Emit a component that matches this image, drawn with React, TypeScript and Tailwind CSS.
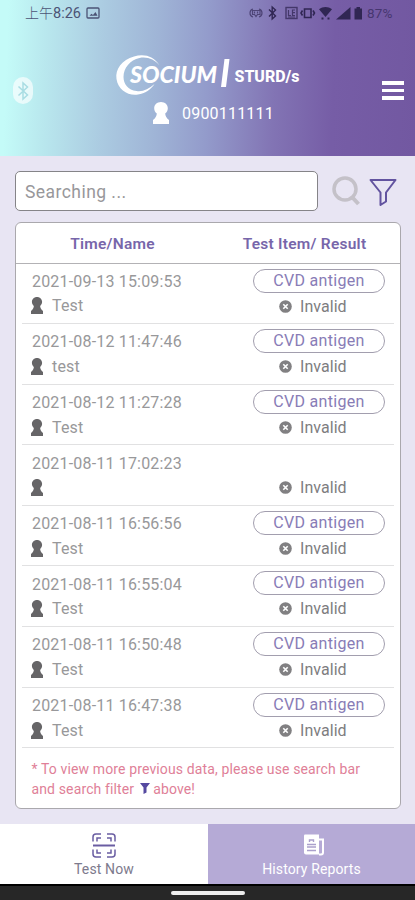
import { ReactNode } from "react";

const records = [
    { time: "2021-09-13 15:09:53", name: "Test", item: "CVD antigen" },
    { time: "2021-08-12 11:47:46", name: "test", item: "CVD antigen" },
    { time: "2021-08-12 11:27:28", name: "Test", item: "CVD antigen" },
    { time: "2021-08-11 17:02:23", name: "", item: "" },
    { time: "2021-08-11 16:56:56", name: "Test", item: "CVD antigen" },
    { time: "2021-08-11 16:55:04", name: "Test", item: "CVD antigen" },
    { time: "2021-08-11 16:50:48", name: "Test", item: "CVD antigen" },
    { time: "2021-08-11 16:47:38", name: "Test", item: "CVD antigen" },
];

function PersonIcon({ className }: { className: string }) {
    return (
        <svg viewBox="0 0 16 22" preserveAspectRatio="none" className={className} fill="currentColor">
            <path d="M8 0c4 0 6.800 2.800 6.800 6.300 0 2.200-.9 4-2.600 5.200.2 2.500 1 4.300 3.800 6.500v4H0v-4c2.800-2.200 3.600-4 3.800-6.500C2.100 10.300 1.200 8.500 1.200 6.300 1.200 2.800 4 0 8 0z" />
        </svg>
    );
}

function StatusBar() {
    return (
        <div className="flex h-[26px] items-center pl-[25px] text-[#4b5375]">
            <span className="w-[57px] whitespace-nowrap">
                <span className="font-['Noto_Sans_CJK_TC',sans-serif] text-[14px] leading-none font-light">上午</span>
                <span className="text-[14.500px] leading-none">8:26</span>
            </span>
            <svg width="14" height="12" viewBox="0 0 14 12" className="ml-[4px]" fill="none" stroke="currentColor" strokeWidth="1.300">
                <rect x="1" y="1" width="12" height="10" rx="1" />
                <path d="M3.500 8.800l2-2 1.500 1.200 2.500-3 2 3.800z" fill="currentColor" stroke="none" />
            </svg>
            <svg width="116" height="18" viewBox="0 0 116 18" className="ml-[149px] text-[#302653]" fill="none" stroke="currentColor" strokeWidth="1.200">
                <g opacity=".65">
                    <path d="M4 5C0 6 0 12 4 13M10 5c4 1 4 7 0 8M3.500 6.500h7.500v4H8.500L7 12.500 5.500 10.500h-2z" />
                    <path d="M5.500 7.500v2M8.500 7.500v2" />
                </g>
                <path d="M20 5.500l6.500 6.500-3.300 3V3l3.300 3-6.500 6.500" strokeWidth="1.400" />
                <rect x="37" y="3.500" width="11" height="11" strokeWidth="1.400" opacity=".75" />
                <path d="M39.500 6v5.500H42M46 6h-2.500v5.500H46M43.500 8.700H46M39 13h7" opacity=".75" />
                <path d="M55.500 5h6.500v8.500h-6.500zM53.500 6.500L52 9l1.500 2.500M64 6.500L65.500 9 64 11.500" strokeWidth="1.600" />
                <path d="M70 5.200c4-3 9-3 13 0L76.500 13z" fill="currentColor" stroke="none" />
                <path d="M72.500 14.500h2M78.500 14.500h2" strokeWidth="2" />
                <path d="M87 15.500L101.500 3v12.500z" fill="currentColor" stroke="none" />
                <path d="M105.500 4.500h2V3h3.500v1.500h2v11h-7.500z" fill="currentColor" stroke="none" />
            </svg>
            <span className="ml-[2px] text-[13.500px] tracking-[0.200px] text-[#46366f]">87%</span>
        </div>
    );
}

function Logo() {
    return (
        <svg width="190" height="44" viewBox="0 0 190 44" className="ml-[115px] block overflow-visible text-white" fill="currentColor">
            <path d="M44.500 12.500C39 3 29 .5 19 3.500 7 7 0 16 1.500 26 3 37 13 43 23 41.500c7-1 13-5 16.500-10.500-6 5.500-12 8-18 7C13 37 8.500 31 8.500 24 8.500 15 15 7 24.500 5c8-1.500 15 1.500 20 7.500z" />
            <text x="15" y="30" fontFamily="Lato, sans-serif" fontWeight="900" fontStyle="italic" fontSize="22" textLength="87" lengthAdjust="spacingAndGlyphs">SOCIUM</text>
            <path d="M109.500 6h5l-3.500 28h-5z" />
            <text x="119.500" y="29" fontFamily="Roboto, sans-serif" fontWeight="800" fontSize="16.500" textLength="65" lengthAdjust="spacingAndGlyphs">STURD/s</text>
        </svg>
    );
}

function Header() {
    return (
        <header className="h-[155.500px] bg-[linear-gradient(92deg,#c4fbf8_2%,#b9e8ee_11%,#abcbe1_25%,#9fb4d6_38%,#939bcb_50%,#8274b4_66%,#765da6_80%,#7258a1_100%)]">
            <StatusBar />
            <div className="flex h-[129px] items-start pt-[27px]">
                <div className="mt-[24px] ml-[13px] flex h-[27px] w-[20px] items-center justify-center rounded-full bg-white/65">
                    <svg width="12" height="20" viewBox="0 0 12 20" fill="none" stroke="#a9dde3" strokeWidth="1.500">
                        <path d="M1.500 5.500l9 8.500L6 18V2l4.500 4-9 8.500" />
                    </svg>
                </div>
                <div className="-ml-[33px] w-[310px]">
                    <Logo />
                    <div className="mt-[4px] flex h-[23px] items-center pl-[153px] text-white">
                        <PersonIcon className="h-[22px] w-[16px]" />
                        <span className="mt-[2px] ml-[13px] text-[16px] leading-none tracking-[0.200px]">0900111111</span>
                    </div>
                </div>
                <div className="mt-[28px] ml-[72px] flex w-[22px] flex-col gap-[4px]">
                    <div className="h-[3.500px] bg-white" />
                    <div className="h-[3.500px] bg-white" />
                    <div className="h-[3.500px] bg-white" />
                </div>
            </div>
        </header>
    );
}

function SearchBar() {
    return (
        <div className="flex h-[40px] items-center">
            <div className="flex h-[40px] w-[303px] items-center rounded-[5px] border-[1.500px] border-[#858488] bg-white pt-[2px] pl-[9px] text-[17.500px] tracking-[0.450px] text-[#98979a]">
                Searching ...
            </div>
            <svg width="30" height="32" viewBox="0 0 30 32" className="ml-[13px]" fill="none" stroke="#c4c1c8" strokeWidth="3.500">
                <circle cx="14" cy="14" r="11" />
                <path d="M21 22l6.500 7" strokeWidth="4" />
            </svg>
            <svg width="28" height="29" viewBox="0 0 28 29" className="mt-[3px] ml-[8px]" fill="none" stroke="#62539f" strokeWidth="2" strokeLinejoin="round">
                <path d="M1.500 2h25l-9.500 12.500v9L11.500 27V14.500z" />
            </svg>
        </div>
    );
}

function RecordRow({ time, name, item }: { time: string; name: string; item: string }) {
    return (
        <div className="mx-[6px] flex h-[60.600px] justify-between border-b-[1.500px] border-[#e1e1e2] pr-[9px] pl-[10px]">
            <div className="pt-[8.400px] text-[16px] text-[#98989a]">
                <div className="h-[20px] leading-[20px] tracking-[0.180px]">{time}</div>
                <div className="mt-[3px] flex h-[22px] items-center">
                    <PersonIcon className="-ml-[1px] h-[17px] w-[12px] text-[#666567]" />
                    <span className="mt-px ml-[9px] leading-none tracking-[0.150px]">{name}</span>
                </div>
            </div>
            <div className="w-[132px] pt-[5px]">
                <div className="h-[24px]">
                    {item && (
                        <div className="flex h-[24px] items-center justify-center rounded-full border border-[#a29eae] text-[16px] leading-none tracking-[0.300px] text-[#887cb6]">
                            {item}
                        </div>
                    )}
                </div>
                <div className="mt-[3px] flex h-[21px] items-center pl-[26px] text-[16px] text-[#7e7d7f]">
                    <svg width="13" height="13" viewBox="0 0 13 13">
                        <circle cx="6.500" cy="6.500" r="6.300" fill="#818082" />
                        <path d="M4.300 4.300l4.400 4.400M8.700 4.300L4.300 8.700" stroke="#fff" strokeWidth="1.600" />
                    </svg>
                    <span className="mt-px ml-[8px] leading-none tracking-[0.050px]">Invalid</span>
                </div>
            </div>
        </div>
    );
}

function NavItem({ label, active, children }: { label: string; active?: boolean; children: ReactNode }) {
    return (
        <div className={`flex h-[60px] flex-col items-center pt-[9px] ${active ? "w-[207px] bg-[#b5aad6] text-white" : "w-[208px] bg-white text-[#7d7a8d]"}`}>
            {children}
            <span className="mt-[4px] text-[14px] leading-[14px] tracking-[0.120px]">{label}</span>
        </div>
    );
}

export default function App() {
    return (
        <div className="flex h-[900px] w-[415px] flex-col overflow-hidden bg-[#e8e5f3] font-['Roboto',sans-serif]">
            <Header />
            <main className="h-[668.500px] px-[15px] pt-[15.500px]">
                <SearchBar />
                <div className="mt-[11px] h-[587px] w-[386px] rounded-[6px] border-[1.500px] border-[#aaa8ad] bg-white">
                    <div className="flex h-[40.500px] items-center border-b-[1.500px] border-[#b3b2b5] text-[15.500px] font-semibold text-[#7766aa]">
                        <span className="w-[193px] pt-[3px] text-center tracking-[0.250px]">Time/Name</span>
                        <span className="w-[191px] pt-[3px] text-center tracking-[0.250px]">Test Item/ Result</span>
                    </div>
                    {records.map((record) => (
                        <RecordRow key={record.time} {...record} />
                    ))}
                    <div className="pt-[10.500px] pl-[15.500px] text-[14px] leading-[20px] tracking-[0.130px] text-[#e07f98]">
                        <p className="whitespace-nowrap">* To view more previous data, please use search bar</p>
                        <p className="flex items-center whitespace-nowrap">
                            and search filter
                            <svg width="10" height="11" viewBox="0 0 10 11" className="mr-[3px] ml-[6px]" fill="#5549a0">
                                <path d="M0 0h10L6.500 4.500V9.500L3.500 11V4.500z" />
                            </svg>
                            above!
                        </p>
                    </div>
                </div>
            </main>
            <nav className="flex h-[60px]">
                <NavItem label="Test Now">
                    <svg width="24" height="25" viewBox="0 0 24 25" fill="none" stroke="#6a5da2" strokeWidth="1.500">
                        <path d="M1 8.500V4q0-3 3-3h5M15 1h5q3 0 3 3v4.500M1 16.500V21q0 3 3 3h5M15 24h5q3 0 3-3v-4.500" />
                        <path d="M5 8.500V5h4M15 5h4v3.500M5 16.500V20h4M15 20h4v-3.500" />
                        <path d="M1 12.500h22" strokeWidth="2" />
                    </svg>
                </NavItem>
                <NavItem label="History Reports" active>
                    <svg width="22" height="25" viewBox="0 0 22 25" className="ml-[4px]" fill="none">
                        <path d="M2 1.500h14v20H3q-2 0-2-2v-17q0-1 1-1z" fill="#fff" />
                        <path d="M16 6.500h4v13q0 2-2 2h-2" stroke="#fff" strokeWidth="2" />
                        <path d="M6.500 9V7h4v2M4 11.500h9M4 14h9M4 17.500h9" stroke="#aaa0cc" strokeWidth="1.400" />
                    </svg>
                </NavItem>
            </nav>
            <div className="flex h-[16px] justify-center border-t-2 border-black bg-[#272727] pt-[5px]">
                <div className="h-[4px] w-[74px] rounded-full bg-[#ededed]" />
            </div>
        </div>
    );
}
